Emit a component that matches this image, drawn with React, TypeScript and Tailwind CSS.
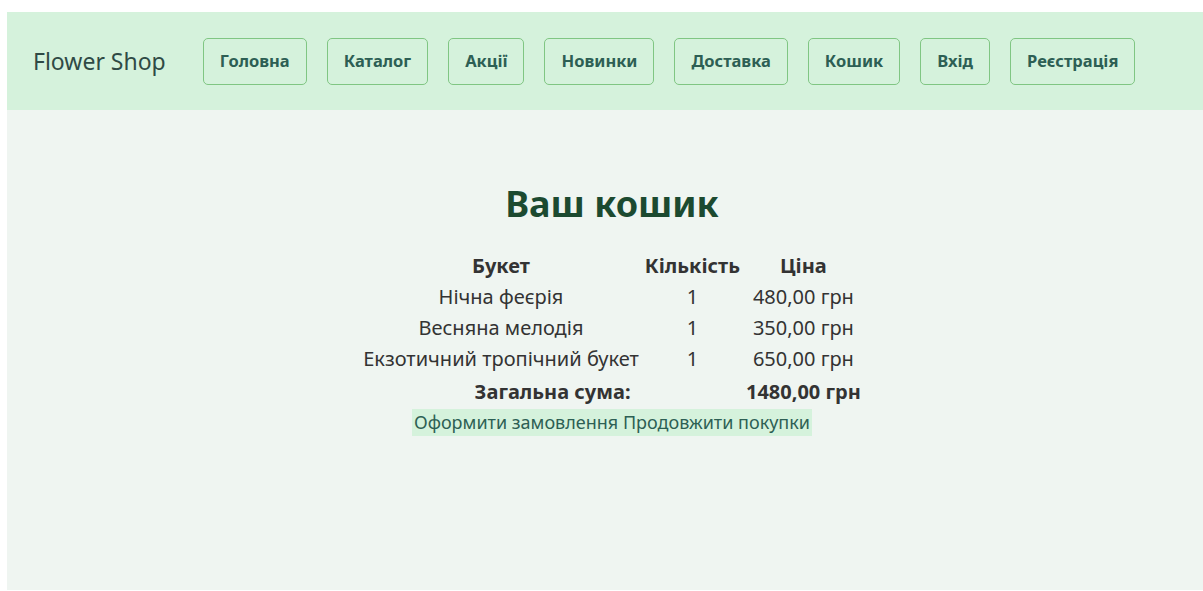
import React from 'react';

const navItems = ['Головна', 'Каталог', 'Акції', 'Новинки', 'Доставка', 'Кошик', 'Вхід', 'Реєстрація'];

const cart = [
  { name: 'Нічна феєрія', qty: 1, price: '480,00 грн' },
  { name: 'Весняна мелодія', qty: 1, price: '350,00 грн' },
  { name: 'Екзотичний тропічний букет', qty: 1, price: '650,00 грн' },
];

export default function App() {
  return (
    <div
      className="min-h-screen bg-white pl-[7px] pt-[12px] pb-px"
      style={{ fontFamily: '"Noto Sans", "Open Sans", sans-serif' }}
    >
      {/* Top bar */}
      <header className="h-[98px] bg-[#d5f2dc] flex items-center pl-[26px]">
        <div className="text-[23px] text-[#2f4a45] mr-[37px]">Flower Shop</div>
        <nav className="flex items-center gap-5">
          {navItems.map((item) => (
            <a
              key={item}
              href="#"
              className="h-[47px] px-[16px] flex items-center border-[1.5px] border-[#80c683] rounded-[5px] text-[16.5px] font-bold text-[#2d5f54]"
            >
              {item}
            </a>
          ))}
        </nav>
      </header>

      {/* Cart */}
      <main className="h-[480px] bg-[#eff5f1] flex flex-col items-center pt-[70px] pl-[14px]">
        <h1 className="text-[36px] font-bold text-[#1c4a30] leading-[48px] mb-[22px]">Ваш кошик</h1>
        <table className="text-[20px] text-[#333]">
          <thead>
            <tr className="h-[31px]">
              <th className="font-bold px-0.5">Букет</th>
              <th className="font-bold px-1">Кількість</th>
              <th className="font-bold px-0.5">Ціна</th>
            </tr>
          </thead>
          <tbody>
            {cart.map((row) => (
              <tr key={row.name} className="h-[31px]">
                <td className="text-center px-0.5">{row.name}</td>
                <td className="text-center px-1">{row.qty}</td>
                <td className="text-center px-0.5">{row.price}</td>
              </tr>
            ))}
            <tr className="h-[35px]">
              <td colSpan={2} className="text-center font-bold px-0.5">Загальна сума:</td>
              <td className="text-center font-bold px-0.5">1480,00 грн</td>
            </tr>
          </tbody>
        </table>
        <div className="bg-[#d5f2dc] text-[18px] text-[#2d5f54] leading-[27px] px-0.5">
          <a href="#">Оформити замовлення</a> <a href="#">Продовжити покупки</a>
        </div>
      </main>
    </div>
  );
}
